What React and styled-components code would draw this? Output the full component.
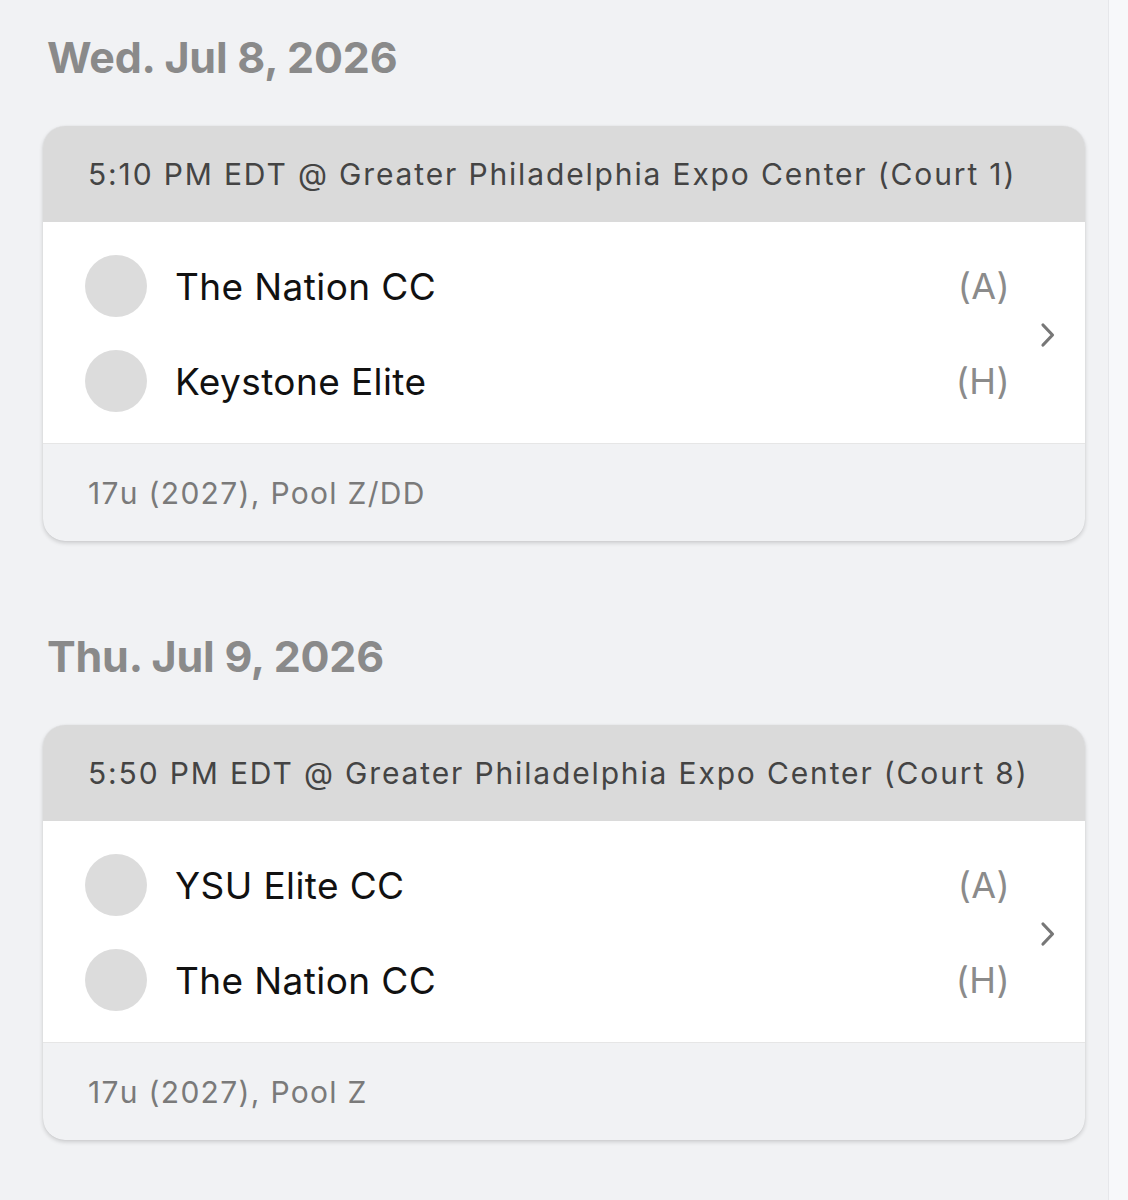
import React from 'react';
import styled, { createGlobalStyle } from 'styled-components';

const GlobalStyle = createGlobalStyle`
  html, body {
    margin: 0;
    padding: 0;
    background: #f1f2f4;
  }
  body {
    font-family: Inter, "Noto Sans", sans-serif;
    -webkit-font-smoothing: antialiased;
  }
`;

const Page = styled.div`
  display: grid;
  grid-template-columns: 1fr 20px;
  min-height: 1200px;
`;

const Main = styled.main`
  padding: 22px 23px 40px 43px;
  display: flex;
  flex-direction: column;
`;

const ScrollStrip = styled.div`
  background: #f7f8fa;
  border-left: 1px solid #e6e7ea;
`;

const Day = styled.section`
  margin-bottom: 80px;
`;

const DayTitle = styled.h2`
  margin: 0 0 34px 4px;
  font-size: 43px;
  line-height: 70px;
  font-weight: 700;
  color: #8a8a8a;
  letter-spacing: -0.2px;
`;

const Card = styled.div`
  border-radius: 22px;
  overflow: hidden;
  background: #f1f2f4;
  box-shadow: 0 2px 4px rgba(0, 0, 0, 0.16), 0 0 1px rgba(0, 0, 0, 0.12);
`;

const CardHeader = styled.div`
  height: 96px;
  display: flex;
  align-items: center;
  padding-left: 45px;
  background: #dadada;
  font-size: 30px;
  letter-spacing: 1.85px;
  color: #444;
`;

const CardBody = styled.div`
  display: flex;
  align-items: center;
  background: #ffffff;
  border-bottom: 1px solid #e6e6e6;
`;

const Teams = styled.div`
  flex: 1;
  display: flex;
  flex-direction: column;
  gap: 33px;
  padding: 33px 0 31px 42px;
`;

const TeamRow = styled.div`
  display: flex;
  align-items: center;
  height: 62px;
`;

const Avatar = styled.div`
  width: 62px;
  height: 62px;
  border-radius: 50%;
  background: #dcdcdc;
  flex-shrink: 0;
`;

const TeamName = styled.span`
  margin-left: 28px;
  flex: 1;
  font-size: 37px;
  letter-spacing: 0.4px;
  color: #111;
`;

const Side = styled.span`
  font-size: 36px;
  letter-spacing: 0.4px;
  color: #8b8b8b;
`;

const Chevron = styled.div`
  width: 75px;
  display: flex;
  justify-content: center;
  padding-top: 4px;
  color: #777;
`;

const CardFooter = styled.div`
  height: 97px;
  display: flex;
  align-items: center;
  padding-left: 45px;
  font-size: 30px;
  letter-spacing: 1.3px;
  color: #7a7a7a;
`;

const days = [
  {
    title: 'Wed. Jul 8, 2026',
    header: '5:10 PM EDT @ Greater Philadelphia Expo Center (Court 1)',
    teams: [
      { name: 'The Nation CC', side: '(A)' },
      { name: 'Keystone Elite', side: '(H)' },
    ],
    footer: '17u (2027), Pool Z/DD',
  },
  {
    title: 'Thu. Jul 9, 2026',
    header: '5:50 PM EDT @ Greater Philadelphia Expo Center (Court 8)',
    teams: [
      { name: 'YSU Elite CC', side: '(A)' },
      { name: 'The Nation CC', side: '(H)' },
    ],
    footer: '17u (2027), Pool Z',
  },
];

function ChevronIcon() {
  return (
    <svg width="16" height="26" viewBox="0 0 16 26" fill="none">
      <path d="M3 3 L12.5 13 L3 23" stroke="currentColor" strokeWidth="3.2" strokeLinecap="round" strokeLinejoin="round" />
    </svg>
  );
}

export default function App() {
  return (
    <Page>
      <GlobalStyle />
      <Main>
        {days.map((d) => (
          <Day key={d.title}>
            <DayTitle>{d.title}</DayTitle>
            <Card>
              <CardHeader>{d.header}</CardHeader>
              <CardBody>
                <Teams>
                  {d.teams.map((t) => (
                    <TeamRow key={t.name}>
                      <Avatar />
                      <TeamName>{t.name}</TeamName>
                      <Side>{t.side}</Side>
                    </TeamRow>
                  ))}
                </Teams>
                <Chevron>
                  <ChevronIcon />
                </Chevron>
              </CardBody>
              <CardFooter>{d.footer}</CardFooter>
            </Card>
          </Day>
        ))}
      </Main>
      <ScrollStrip />
    </Page>
  );
}
